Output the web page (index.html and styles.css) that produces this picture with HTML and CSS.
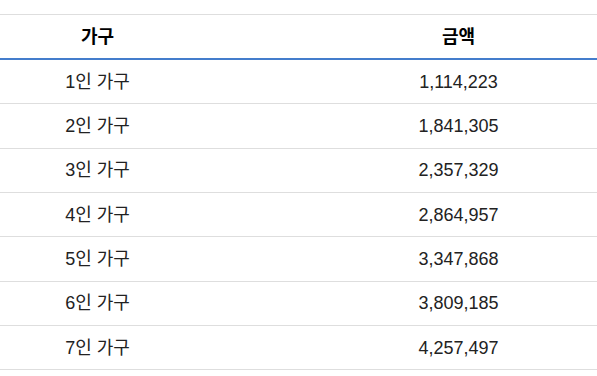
FILE: index.html
```html
<!DOCTYPE html>
<html lang="ko">
<head>
<meta charset="utf-8">
<title>가구별 금액</title>
<link rel="stylesheet" href="styles.css">
</head>
<body>
<div class="frame">
  <table class="data-table">
    <thead>
      <tr><th>가구</th><th>금액</th></tr>
    </thead>
    <tbody>
      <tr><td>1인 가구</td><td>1,114,223</td></tr>
      <tr><td>2인 가구</td><td>1,841,305</td></tr>
      <tr><td>3인 가구</td><td>2,357,329</td></tr>
      <tr><td>4인 가구</td><td>2,864,957</td></tr>
      <tr><td>5인 가구</td><td>3,347,868</td></tr>
      <tr><td>6인 가구</td><td>3,809,185</td></tr>
      <tr><td>7인 가구</td><td>4,257,497</td></tr>
    </tbody>
  </table>
</div>
</body>
</html>
```
FILE: styles.css
```css
html, body {
  margin: 0;
  padding: 0;
  background: #fff;
}
body {
  font-family: "Liberation Sans", Arial, "Noto Sans CJK KR", sans-serif;
  color: #222;
}
.frame {
  width: 597px;
  height: 376px;
  overflow: hidden;
  padding-top: 14px;
  box-sizing: border-box;
}
.data-table {
  margin-left: -83px;
  width: 722px;
  table-layout: fixed;
  border-collapse: separate;
  border-spacing: 0;
  font-size: 18px;
}
.data-table th,
.data-table td {
  padding: 0;
  text-align: center;
  vertical-align: middle;
  line-height: 20px;
}
.data-table th {
  height: 43px;
  font-weight: bold;
  color: #000;
  border-top: 1px solid #dedede;
  border-bottom: 2px solid #447dcc;
}
.data-table td {
  height: 43.33px;
  border-bottom: 1px solid #dedede;
}
```
